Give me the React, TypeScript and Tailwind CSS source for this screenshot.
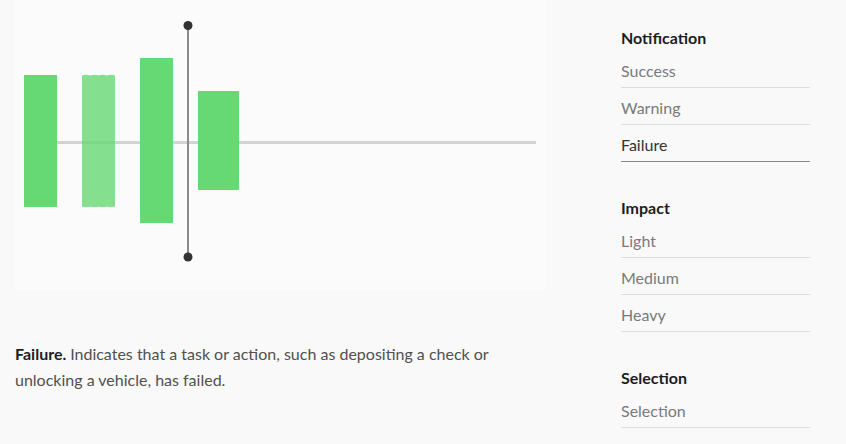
import React from 'react';

type Section = {
  title: string;
  items: string[];
  active?: string;
};

const sections: Section[] = [
  { title: 'Notification', items: ['Success', 'Warning', 'Failure'], active: 'Failure' },
  { title: 'Impact', items: ['Light', 'Medium', 'Heavy'] },
  { title: 'Selection', items: ['Selection'] },
];

// wavy edge for the "in between" bar
function wavyBar(x: number, y1: number, y2: number, w: number) {
  const n = 4;
  const step = w / n;
  let d = `M${x} ${y1}`;
  for (let i = 0; i < n; i++) d += ` q${step / 2} -1.6 ${step} 0`;
  d += ` L${x + w} ${y2}`;
  for (let i = 0; i < n; i++) d += ` q${-step / 2} 1.6 ${-step} 0`;
  return d + ' Z';
}

function HapticChart() {
  return (
    <svg width="532" height="290" viewBox="15 0 532 290" className="block">
      <line x1="24" y1="142.5" x2="536" y2="142.5" stroke="#d3d3d3" strokeWidth="3" />
      <rect x="24" y="75" width="33" height="132" fill="#67d974" />
      <path d={wavyBar(82, 75.5, 206.5, 33)} fill="#67d974" fillOpacity="0.8" />
      <rect x="140" y="58" width="33" height="165" fill="#67d974" />
      <rect x="198" y="91" width="41" height="99" fill="#67d974" />
      <line x1="188" y1="26" x2="188" y2="257" stroke="#8a8a8a" strokeWidth="2" />
      <circle cx="188" cy="25.5" r="4.5" fill="#333333" />
      <circle cx="188" cy="257" r="4.5" fill="#333333" />
    </svg>
  );
}

export default function App() {
  return (
    <div
      className="flex w-[846px] h-[444px] bg-[#f9f9f9] overflow-hidden"
      style={{ fontFamily: 'Lato, "Noto Sans", sans-serif' }}
    >
      <div className="w-[547px] pl-[15px]">
        <div className="bg-[#fbfbfb] h-[290px]">
          <HapticChart />
        </div>
        <p className="mt-[51px] text-[16px] leading-[26px] text-[#505050] pr-[20px]">
          <span className="font-bold text-[#1d1d1f]">Failure. </span>
          Indicates that a task or action, such as depositing a check or
          <br />
          unlocking a vehicle, has failed.
        </p>
      </div>

      <div className="ml-[74px] w-[189px] pt-[26px] flex flex-col gap-[34px]">
        {sections.map((s) => (
          <div key={s.title}>
            <h3 className="text-[16px] leading-[24px] font-bold text-[#1d1d1f] mb-[1px]">{s.title}</h3>
            {s.items.map((item) => (
              <div
                key={item}
                className={`pt-[8px] pb-[4px] text-[16px] leading-[24px] border-b ${
                  item === s.active ? 'border-[#888888] text-[#333333]' : 'border-[#dcdcdc] text-[#7a7a7a]'
                }`}
              >
                {item}
              </div>
            ))}
          </div>
        ))}
      </div>
    </div>
  );
}
